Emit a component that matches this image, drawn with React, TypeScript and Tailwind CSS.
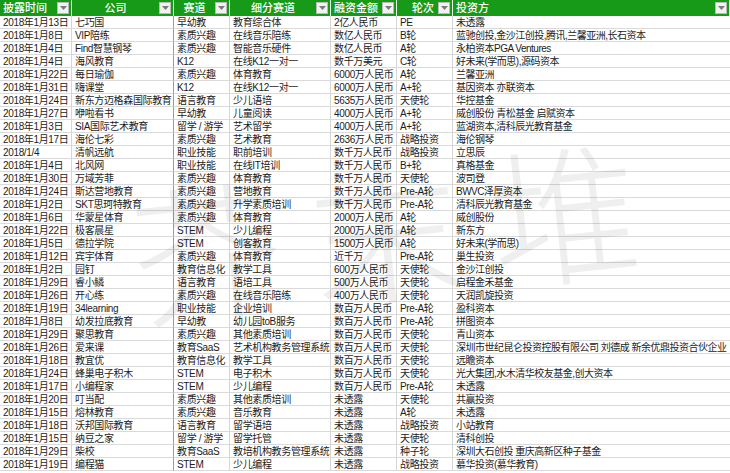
const headers = [
  { label: "披露时间", align: "justify-start" },
  { label: "公司", align: "justify-center" },
  { label: "赛道", align: "justify-center" },
  { label: "细分赛道", align: "justify-center" },
  { label: "融资金额", align: "justify-start" },
  { label: "轮次", align: "justify-end" },
  { label: "投资方", align: "justify-start" },
];

const rows: string[][] = [
  ["2018年1月13日", "七巧国", "早幼教", "教育综合体", "2亿人民币", "PE", "未透露"],
  ["2018年1月8日", "VIP陪练", "素质兴趣", "在线音乐陪练", "数亿人民币", "B轮", "蓝驰创投,金沙江创投,腾讯,兰馨亚洲,长石资本"],
  ["2018年1月4日", "Find智慧钢琴", "素质兴趣", "智能音乐硬件", "数亿人民币", "A轮", "永柏资本PGA Ventures"],
  ["2018年1月4日", "海风教育", "K12", "在线K12一对一", "数千万美元", "C轮", "好未来(学而思),源码资本"],
  ["2018年1月22日", "每日瑜伽", "素质兴趣", "体育教育", "6000万人民币", "A轮", "兰馨亚洲"],
  ["2018年1月31日", "嗨课堂", "K12", "在线K12一对一", "6000万人民币", "A+轮", "基因资本 亦联资本"],
  ["2018年1月24日", "新东方迈格森国际教育", "语言教育", "少儿语培", "5635万人民币", "天使轮", "华控基金"],
  ["2018年1月27日", "咿啦看书", "早幼教", "儿童阅读", "4000万人民币", "A+轮", "威创股份 青松基金 启赋资本"],
  ["2018年1月3日", "SIA国际艺术教育", "留学 / 游学", "艺术留学", "4000万人民币", "A+轮", "蓝湖资本,清科辰光教育基金"],
  ["2018年1月17日", "海伦七彩", "素质兴趣", "艺术教育", "2636万人民币", "战略投资", "海伦钢琴"],
  ["2018/1/4", "清帆远航", "职业技能", "职前培训", "数千万人民币", "战略投资", "立思辰"],
  ["2018年1月4日", "北风网", "职业技能", "在线IT培训", "数千万人民币", "B+轮", "真格基金"],
  ["2018年1月30日", "万域芳菲", "素质兴趣", "体育教育", "数千万人民币", "天使轮", "波司登"],
  ["2018年1月24日", "斯达营地教育", "素质兴趣", "营地教育", "数千万人民币", "Pre-A轮", "BWVC泽厚资本"],
  ["2018年1月2日", "SKT思珂特教育", "素质兴趣", "升学素质培训", "数千万人民币", "Pre-A轮", "清科辰光教育基金"],
  ["2018年1月6日", "华蒙星体育", "素质兴趣", "体育教育", "2000万人民币", "A轮", "威创股份"],
  ["2018年1月22日", "极客晨星", "STEM", "少儿编程", "2000万人民币", "A轮", "新东方"],
  ["2018年1月5日", "德拉学院", "STEM", "创客教育", "1500万人民币", "A轮", "好未来(学而思)"],
  ["2018年1月12日", "宾宇体育", "素质兴趣", "体育教育", "近千万", "Pre-A轮", "巢生投资"],
  ["2018年1月2日", "园钉", "教育信息化", "教学工具", "600万人民币", "天使轮", "金沙江创投"],
  ["2018年1月29日", "睿小鳞", "语言教育", "语培工具", "500万人民币", "天使轮", "启程金禾基金"],
  ["2018年1月26日", "开心练", "素质兴趣", "在线音乐陪练", "400万人民币", "天使轮", "天润凯旋投资"],
  ["2018年1月19日", "34learning", "职业技能", "企业培训", "数百万人民币", "Pre-A轮", "盈科资本"],
  ["2018年1月8日", "幼发拉底教育", "早幼教", "幼儿园toB服务", "数百万人民币", "Pre-A轮", "拼图资本"],
  ["2018年1月29日", "聚思教育", "素质兴趣", "其他素质培训", "数百万人民币", "天使轮", "青山资本"],
  ["2018年1月26日", "爱来课", "教育SaaS", "艺术机构教务管理系统", "数百万人民币", "天使轮", "深圳市世纪昆仑投资控股有限公司 刘德成 新余优鼎投资合伙企业"],
  ["2018年1月18日", "教宜优", "教育信息化", "教学工具", "数百万人民币", "天使轮", "远瞻资本"],
  ["2018年1月24日", "蜂巢电子积木", "STEM", "电子积木", "数百万人民币", "天使轮", "光大集团,水木清华校友基金,创大资本"],
  ["2018年1月17日", "小编程家", "STEM", "少儿编程", "数百万人民币", "Pre-A轮", "未透露"],
  ["2018年1月20日", "叮当配", "素质兴趣", "其他素质培训", "未透露", "天使轮", "共赢投资"],
  ["2018年1月15日", "熔林教育", "素质兴趣", "音乐教育", "未透露", "A轮", "未透露"],
  ["2018年1月18日", "沃邦国际教育", "语言教育", "留学语培", "未透露", "战略投资", "小站教育"],
  ["2018年1月15日", "纳豆之家", "留学 / 游学", "留学托管", "未透露", "天使轮", "清科创投"],
  ["2018年1月29日", "柴校", "教育SaaS", "教培机构教务管理系统", "未透露", "种子轮", "深圳大石创投 重庆高新区种子基金"],
  ["2018年1月19日", "编程猫", "STEM", "少儿编程", "未透露", "战略投资", "慕华投资(慕华教育)"],
];

function FilterButton() {
  return (
    <div className="flex h-[12px] w-[12px] shrink-0 items-center justify-center border border-[#b9b9b9] bg-[#f2f2f2]">
      <svg width="7" height="4" viewBox="0 0 7 4">
        <path d="M0 0h7L3.5 4z" fill="#7a7a7a" />
      </svg>
    </div>
  );
}

export default function App() {
  return (
    <div
      className="relative h-[473px] w-[730px] overflow-hidden bg-white text-[#1c1c1c]"
      style={{ fontFamily: '"Liberation Sans", "Noto Sans CJK SC", sans-serif' }}
    >
      <div className="grid grid-cols-[72px_102px_56px_101px_66px_56px_1fr]">
        {headers.map((h, i) => (
          <div
            key={h.label}
            className="flex h-[16px] items-center gap-[3px] border-r border-[#e6f3e6] bg-[#179a17] pl-[3px] pr-[2px] text-[11px] font-medium text-white"
          >
            <div className={`flex flex-1 ${h.align} ${i === 5 ? "pr-[1px]" : ""}`}>
              <span className="leading-[16px]">{h.label}</span>
            </div>
            <FilterButton />
          </div>
        ))}
        {rows.map((r, ri) =>
          r.map((c, ci) => (
            <div
              key={`${ri}-${ci}`}
              className={`h-[13px] overflow-hidden whitespace-nowrap border-b border-[#dadada] pl-[3px] text-[10px] leading-[13px] ${
                ci === 6 ? "tracking-[-0.5px]" : "tracking-[-0.35px]"
              } ${ci === 1 ? "border-r border-r-[#9c9c9c]" : ci === 6 ? "" : "border-r border-r-[#d6d6d6]"}`}
            >
              {c}
            </div>
          ))
        )}
      </div>

      {/* watermark */}
      <div className="pointer-events-none absolute inset-0 flex items-center justify-center">
        <div
          className="-mt-[20px] ml-[40px] flex -rotate-[6deg] gap-[30px] text-[150px] font-light leading-none text-black opacity-[0.06]"
          style={{ fontFamily: '"Noto Sans CJK SC", sans-serif' }}
        >
          <span>芥</span>
          <span>末</span>
          <span>堆</span>
        </div>
      </div>
    </div>
  );
}
